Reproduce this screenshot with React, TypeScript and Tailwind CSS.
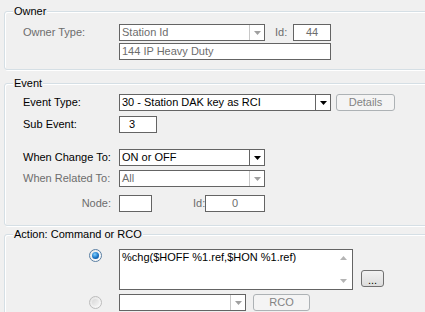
import React from 'react';

const font = { fontFamily: '"Liberation Sans", Arial, sans-serif' };

function Group({ title, className, children }: { title: string; className?: string; children: React.ReactNode }) {
  return (
    <div className={`relative w-[440px] rounded-[3px] border border-[#d5dfe5] shadow-[inset_1px_1px_0_#ffffff,1px_1px_0_#ffffff] ${className ?? ''}`}>
      <span className="absolute left-[8px] top-[-8px] bg-[#f0f0f0] px-[1px] leading-[14px] text-black">{title}</span>
      {children}
    </div>
  );
}

function Arrow({ color }: { color: string }) {
  return (
    <svg width="7" height="4" viewBox="0 0 7 4">
      <polygon points="0,0 7,0 3.5,4" fill={color} />
    </svg>
  );
}

function Combo({ value, w, disabled }: { value: string; w: string; disabled?: boolean }) {
  return (
    <div className={`flex h-[17px] ${w} border border-[#646464] bg-white`}>
      <div className={`flex-1 pl-[2px] leading-[15px] whitespace-nowrap ${disabled ? 'text-[#6d6d6d]' : 'text-black'}`}>{value}</div>
      <div className={`flex w-[15px] items-center justify-center border-l ${disabled ? 'border-[#c8c8c8]' : 'border-[#646464]'}`}>
        <Arrow color={disabled ? '#a0a0a0' : '#000000'} />
      </div>
    </div>
  );
}

function Field({ value, w, disabled, align }: { value: string; w: string; disabled?: boolean; align?: string }) {
  return (
    <div className={`h-[17px] ${w} border border-[#646464] bg-white leading-[15px] whitespace-nowrap ${align ?? 'pl-[2px]'} ${disabled ? 'text-[#6d6d6d]' : 'text-black'}`}>
      {value}
    </div>
  );
}

function Btn({ label, w, disabled }: { label: string; w: string; disabled?: boolean }) {
  return (
    <div
      className={`flex h-[17px] ${w} items-center justify-center rounded-[3px] border leading-[15px] ${
        disabled
          ? 'border-[#adb2b5] bg-[#f4f4f4] text-[#838383]'
          : 'border-[#707070] bg-gradient-to-b from-[#f2f2f2] to-[#dcdcdc] text-black'
      }`}
    >
      {label}
    </div>
  );
}

function Radio({ checked }: { checked?: boolean }) {
  return (
    <div
      className={`flex h-[13px] w-[13px] items-center justify-center rounded-full border ${
        checked ? 'border-[#5a7fa3] bg-gradient-to-br from-[#e8e8e8] to-[#ffffff]' : 'border-[#bcbcbc] bg-gradient-to-br from-[#e4e4e4] to-[#fafafa]'
      }`}
    >
      {checked ? (
        <div className="h-[7px] w-[7px] rounded-full bg-[radial-gradient(circle_at_40%_35%,#7fd0ff,#1a73c4_55%,#0b3f7a)]" />
      ) : (
        <div className="h-[7px] w-[7px] rounded-full bg-gradient-to-br from-[#d8d8d8] to-[#f4f4f4]" />
      )}
    </div>
  );
}

export default function App() {
  return (
    <div className="h-[312px] w-[425px] overflow-hidden bg-[#f0f0f0] pl-[4px] pt-[11px] text-[11px]" style={font}>
      {/* Owner */}
      <Group title="Owner" className="pb-[9px] pl-[18px] pt-[12px]">
        <div className="flex h-[17px] items-center">
          <span className="w-[96px] text-[#6d6d6d]">Owner Type:</span>
          <Combo value="Station Id" w="w-[146px]" disabled />
          <span className="ml-[10px] w-[18px] text-[#6d6d6d]">Id:</span>
          <Field value="44" w="w-[38px]" disabled align="text-center" />
        </div>
        <div className="ml-[96px] mt-[2px]">
          <Field value="144 IP Heavy Duty" w="w-[212px]" disabled />
        </div>
      </Group>

      {/* Event */}
      <Group title="Event" className="mt-[13px] pb-[13px] pl-[18px] pt-[10px]">
        <div className="flex h-[17px] items-center">
          <span className="w-[96px]">Event Type:</span>
          <Combo value="30 - Station DAK key as RCI" w="w-[212px]" />
          <div className="ml-[5px]">
            <Btn label="Details" w="w-[59px]" disabled />
          </div>
        </div>
        <div className="mt-[5px] flex items-center">
          <span className="w-[96px]">Sub Event:</span>
          <Field value="3" w="w-[38px] h-[16px]" align="pl-[9px]" />
        </div>
        <div className="mt-[16px] flex items-center">
          <span className="w-[96px]">When Change To:</span>
          <Combo value="ON or OFF" w="w-[146px]" />
        </div>
        <div className="mt-[4px] flex items-center">
          <span className="w-[96px] text-[#6d6d6d]">When Related To:</span>
          <Combo value="All" w="w-[146px]" disabled />
        </div>
        <div className="mt-[8px] flex items-center">
          <span className="w-[96px] pr-[8px] text-right text-[#6d6d6d]">Node:</span>
          <Field value="" w="w-[33px]" />
          <span className="ml-[41px] w-[12px] text-[#6d6d6d]">Id:</span>
          <Field value="0" w="w-[60px]" disabled align="text-center" />
        </div>
      </Group>

      {/* Action */}
      <Group title="Action: Command or RCO" className="mt-[8px] pb-[5px] pl-[18px] pt-[14px]">
        <div className="flex items-start">
          <div className="flex w-[96px] justify-end pr-[17px]">
            <Radio checked />
          </div>
          <div className="flex h-[41px] w-[234px] border border-[#646464] bg-white">
            <div className="flex-1 pl-[2px] pt-[1px] leading-[13px] whitespace-nowrap">%chg($HOFF %1.ref,$HON %1.ref)</div>
            <div className="flex w-[17px] flex-col items-center justify-between py-[6px]">
              <svg width="7" height="4" viewBox="0 0 7 4">
                <polygon points="0,4 7,4 3.5,0" fill="#b4b4b4" />
              </svg>
              <Arrow color="#b4b4b4" />
            </div>
          </div>
          <div className="ml-[8px] mt-[21px]">
            <div className="flex h-[17px] w-[23px] items-end justify-center rounded-[3px] border border-[#707070] bg-gradient-to-b from-[#f2f2f2] to-[#dcdcdc] leading-[12px] text-black">
              ...
            </div>
          </div>
        </div>
        <div className="mt-[4px] flex items-center">
          <div className="flex w-[96px] justify-end pr-[17px]">
            <Radio />
          </div>
          <Combo value="" w="w-[127px]" disabled />
          <div className="ml-[7px]">
            <Btn label="RCO" w="w-[57px]" disabled />
          </div>
        </div>
      </Group>
    </div>
  );
}
